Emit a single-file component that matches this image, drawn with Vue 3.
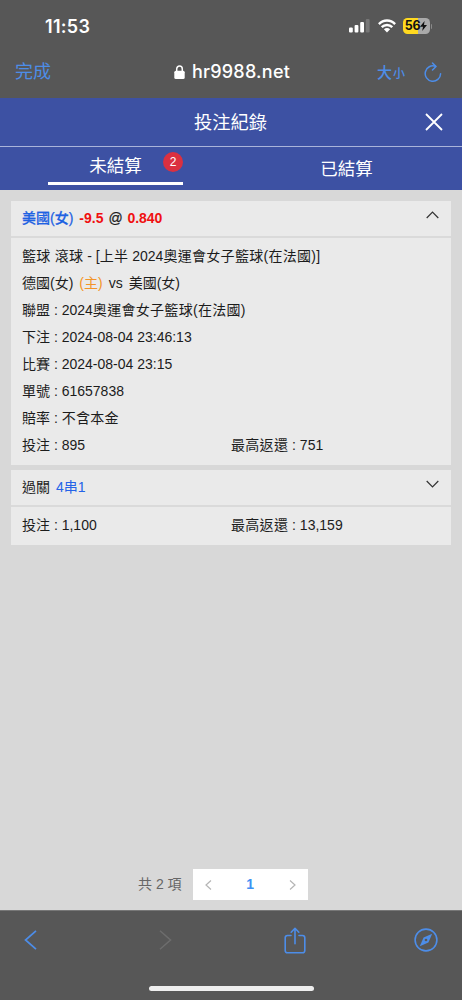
<script setup>
const details = [
  ['聯盟', '2024', '奧運會女子籃球(在法國)'],
  ['下注', '2024-08-04 23:46:13'],
  ['比賽', '2024-08-04 23:15'],
  ['單號', '61657838'],
  ['賠率', '', '不含本金'],
]
</script>

<template>
  <div class="screen">
    <div class="status">
      <span class="clock">11:53</span>
      <div class="indicators">
        <svg class="signal" width="21" height="14" viewBox="0 0 21 14">
          <rect x="0" y="8.5" width="3.8" height="5" rx="1.1" fill="#fff" />
          <rect x="5.6" y="6" width="3.8" height="7.5" rx="1.1" fill="#fff" />
          <rect x="11.2" y="3" width="3.8" height="10.5" rx="1.1" fill="#fff" />
          <rect x="16.8" y="0" width="3.8" height="13.5" rx="1.1" fill="#777" />
        </svg>
        <svg class="wifi" width="18" height="14" viewBox="0 0 18 14">
          <g fill="none" stroke="#fff" stroke-width="2.4">
            <path d="M.9 5.1C5.5 .3 12.5 .3 17.1 5.1" />
            <path d="M3.7 8.2C6.7 5.2 11.3 5.2 14.3 8.2" />
          </g>
          <path d="M5.9 10.3C7.6 8.7 10.4 8.7 12.1 10.3L9 13.5Z" fill="#fff" />
        </svg>
        <div class="battery">
          <span>56</span>
          <svg width="7" height="10" viewBox="0 0 7 10"><path d="M4.6 0L0 5.8H3L2.2 10L7 4.1H4Z" fill="#111" /></svg>
        </div>
        <i class="nub"></i>
      </div>
    </div>

    <div class="address">
      <span class="done">完成</span>
      <div class="host">
        <svg width="11" height="14" viewBox="0 0 11 14">
          <rect x=".3" y="5.8" width="10.4" height="8.2" rx="1.5" fill="#fff" />
          <path d="M2.7 7V4A2.8 3 0 0 1 8.3 4V7" fill="none" stroke="#fff" stroke-width="1.5" />
        </svg>
        <span>hr9988.net</span>
      </div>
      <div class="tools">
        <span class="big">大</span><span class="small">小</span>
        <svg class="reload" width="18" height="21" viewBox="0 0 18 21">
          <g fill="none" stroke="#4d8de8" stroke-width="1.5" stroke-linecap="round" stroke-linejoin="round">
            <path d="M11.5 4.3A7.7 7.7 0 1 0 16.6 11.8" />
            <path d="M8.5 1L12 4.5L8.5 8" />
          </g>
        </svg>
      </div>
    </div>

    <header class="title">
      <h1>投注紀錄</h1>
      <svg class="close" width="18" height="18" viewBox="0 0 18 18"><path d="M1 1L17 17M17 1L1 17" stroke="#fff" stroke-width="1.8" /></svg>
    </header>
    <nav class="tabs">
      <div class="tab active"><span class="label">未結算</span><span class="badge">2</span></div>
      <div class="tab"><span class="label">已結算</span></div>
    </nav>

    <main>
      <section class="card first">
        <div class="head">
          <div class="line bet"><span class="team">美國(女)</span><b>-9.5</b><span class="at">@</span><b>0.840</b></div>
          <svg width="13" height="8" viewBox="0 0 13 8"><path d="M.7 7L6.5 1L12.3 7" fill="none" stroke="#333" stroke-width="1.2" /></svg>
        </div>
        <div class="body">
          <div class="line"><span class="han">籃球 滾球</span> - [<span class="han">上半</span> 2024<span class="han">奧運會女子籃球(在法國)</span>]</div>
          <div class="line match"><span>德國(女)</span><span class="home">(主)</span><span>vs</span><span>美國(女)</span></div>
          <div v-for="[name, value, han] in details" :key="name" class="line">{{ name }} : {{ value }}<span v-if="han" class="han">{{ han }}</span></div>
          <div class="line pair"><span>投注 : 895</span><span><span class="han">最高返還</span> : 751</span></div>
        </div>
      </section>
      <section class="card second">
        <div class="head">
          <div class="line bet"><span>過關</span><span class="combo">4串1</span></div>
          <svg width="13" height="8" viewBox="0 0 13 8"><path d="M.7 1L6.5 7L12.3 1" fill="none" stroke="#333" stroke-width="1.2" /></svg>
        </div>
        <div class="body">
          <div class="line pair"><span>投注 : 1,100</span><span><span class="han">最高返還</span> : 13,159</span></div>
        </div>
      </section>
      <div class="pagination">
        <span>共 2 項</span>
        <div class="pager">
          <svg width="7" height="10" viewBox="0 0 7 10"><path d="M6 .5L1 5L6 9.5" fill="none" stroke="#b5b5b5" stroke-width="1.2" /></svg>
          <b>1</b>
          <svg width="7" height="10" viewBox="0 0 7 10"><path d="M1 .5L6 5L1 9.5" fill="none" stroke="#b5b5b5" stroke-width="1.2" /></svg>
        </div>
      </div>
    </main>

    <footer>
      <div class="nav">
        <svg width="13" height="20" viewBox="0 0 13 20"><path d="M12 .8L1.5 10L12 19.2" fill="none" stroke="#4d8de8" stroke-width="1.7" /></svg>
        <svg class="forward" width="13" height="20" viewBox="0 0 13 20"><path d="M1 .8L11.5 10L1 19.2" fill="none" stroke="#6d6d6d" stroke-width="1.5" /></svg>
        <svg class="share" width="22" height="27" viewBox="0 0 22 27">
          <g fill="none" stroke="#4d8de8" stroke-width="1.6" stroke-linecap="round" stroke-linejoin="round">
            <path d="M7 8.5H3.5Q1.2 8.5 1.2 10.8V23.5Q1.2 25.8 3.5 25.8H18.5Q20.8 25.8 20.8 23.5V10.8Q20.8 8.5 18.5 8.5H15" />
            <path d="M11 16.8V1.5M7.2 5.2L11 1.3L14.8 5.2" />
          </g>
        </svg>
        <svg width="24" height="24" viewBox="0 0 24 24">
          <circle cx="12" cy="12" r="10.9" fill="none" stroke="#4d8de8" stroke-width="1.6" />
          <path d="M18.2 5.8L9.6 9.6L5.8 18.2L14.4 14.4Z" fill="#4d8de8" />
          <circle cx="12" cy="12" r="1.3" fill="#575757" />
        </svg>
      </div>
      <div class="home-bar"></div>
    </footer>
  </div>
</template>

<style>
body { margin: 0; background: #575757; }
</style>

<style scoped>
* { box-sizing: border-box; }
svg { display: block; flex: none; }
.screen { width: 462px; height: 1000px; display: flex; flex-direction: column; overflow: hidden; background: #575757; font: 14px/27px "Liberation Sans", "Noto Sans CJK TC", sans-serif; color: #1c1c1c; }
.status { height: 52px; display: flex; justify-content: space-between; padding: 16px 30px 0 45px; }
.clock { color: #fff; font: 600 18px/22px Inter, sans-serif; letter-spacing: .3px; }
.indicators { display: flex; height: 20px; align-items: center; }
.wifi { margin-left: 8px; }
.battery { width: 27px; height: 16px; margin-left: 7px; border-radius: 4.5px; background: linear-gradient(90deg, #ffd91f 56%, #aaa 56%); display: flex; align-items: center; justify-content: center; color: #111; font: 700 12.5px/16px Inter, sans-serif; letter-spacing: -.3px; }
.nub { width: 1.5px; height: 5px; margin-left: 1px; border-radius: 0 2px 2px 0; background: #8a8a8a; }
.address { height: 46px; display: grid; grid-template-columns: 137px 1fr 130px; align-items: center; padding: 1px 20px 6px 15px; color: #4d8de8; }
.done { font-size: 18px; }
.host { margin-top: -2px; display: flex; align-items: center; justify-content: center; gap: 7px; color: #fff; font: 500 18px/24px Inter, sans-serif; letter-spacing: .25px; }
.tools { display: flex; align-items: center; justify-content: flex-end; }
.big { font-size: 15px; font-weight: 500; }
.small { font-size: 12px; font-weight: 500; margin: 3px 19px 0 1px; }
.title { height: 49px; background: #3d51a3; border-bottom: 1px solid #aab4da; display: grid; grid-template-columns: 1fr auto 1fr; align-items: center; padding: 0 19px; color: #fff; }
h1 { grid-column: 2; margin: 2px 1px 0 0; font-size: 18.3px; font-weight: 400; line-height: 28px; }
.close { justify-self: end; }
.tabs { height: 43px; background: #3d51a3; display: flex; color: #fff; font-size: 17.5px; }
.tab { width: 231px; position: relative; display: flex; justify-content: center; padding-top: 9px; }
.tab.active { padding-top: 6px; }
.tab.active::after { content: ""; position: absolute; left: 48px; bottom: 5px; width: 135px; height: 3px; background: #fff; }
.badge { position: absolute; left: 163px; top: 5px; width: 20px; height: 20px; border-radius: 50%; background: #db3040; font-size: 12px; line-height: 20px; text-align: center; }
main { height: 720px; background: #d8d8d8; padding: 11px 11px 10px; display: flex; flex-direction: column; }
.card { background: #eaeaea; }
.first { height: 264px; }
.second { height: 75px; margin-top: 5px; }
.head { height: 37px; border-bottom: 2px solid #dadada; padding: 4px 12px 0 11px; display: flex; justify-content: space-between; }
.head svg { margin-top: 6px; }
.body { padding: 5px 11px 0; }
.line { white-space: pre; height: 27px; }
.han { letter-spacing: .3px; }
.bet, .match { display: flex; gap: 6px; }
.bet b { color: #f01010; }
.team { color: #1f62e2; font-weight: 500; }
.team, .at { -webkit-text-stroke: .25px currentColor; }
.at { margin: 0 -1.3px 0 -1px; }
.combo { color: #2463e8; }
.home { color: #f39428; }
.pair { display: grid; grid-template-columns: 209px 1fr; }
.pagination { margin-top: auto; margin-left: 127px; display: flex; align-items: center; gap: 11px; color: #666; }
.pager { width: 115px; height: 31px; background: #fff; padding: 0 12px; display: flex; justify-content: space-between; align-items: center; }
.pager b { color: #3e91f3; }
footer { height: 90px; background: #575757; border-top: 1px solid #777; }
.nav { height: 58px; padding: 0 24px; display: grid; grid-template-columns: 135px 125px 1fr auto; align-items: center; }
.home-bar { width: 165px; height: 5px; border-radius: 3px; background: #eee; margin: 17px auto 0; }
</style>
